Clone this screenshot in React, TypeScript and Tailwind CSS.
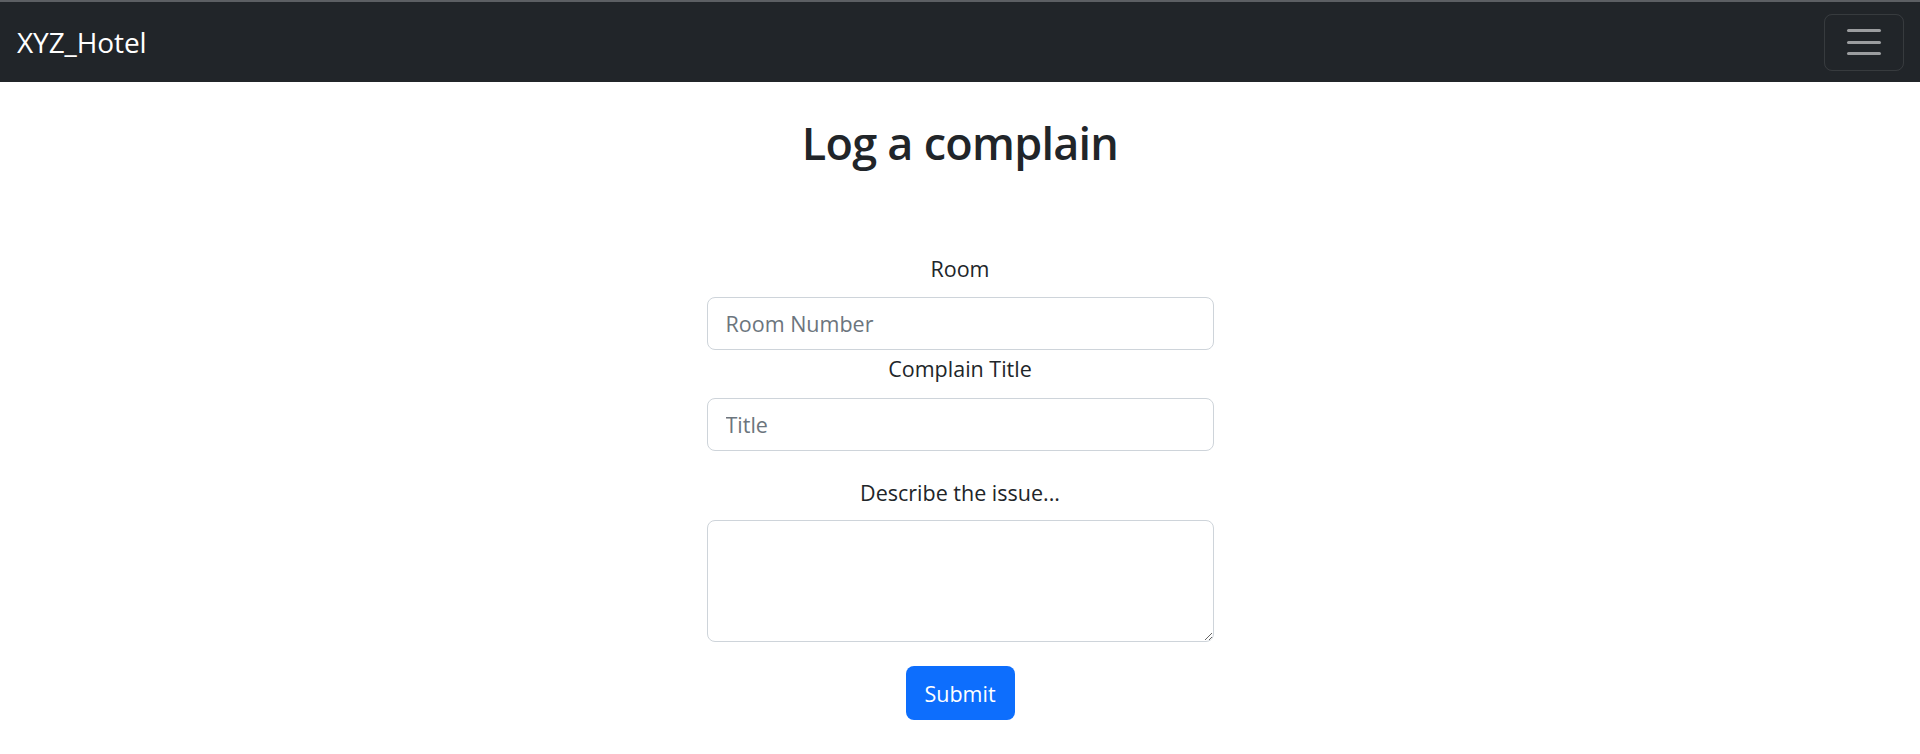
export default function App() {
  return (
    <div className="min-h-screen bg-white font-['Open_Sans',sans-serif] text-[#212529]">
      {/* Navbar */}
      <nav className="h-[82px] border-t-2 border-[#5c5f63] bg-[#212529] flex items-center justify-between pl-[17px] pr-[16px]">
        <a href="#" className="text-[28px] leading-none text-white tracking-[-0.1px]">
          XYZ_Hotel
        </a>
        <button className="w-[80px] h-[57px] rounded-[8px] border border-white/10 flex flex-col items-center justify-center gap-[8.5px]">
          <span className="block w-[34px] h-[3px] bg-white/55 rounded-full" />
          <span className="block w-[34px] h-[3px] bg-white/55 rounded-full" />
          <span className="block w-[34px] h-[3px] bg-white/55 rounded-full" />
        </button>
      </nav>

      {/* Title */}
      <h1 className="mt-[34px] text-center text-[45px] leading-[1.2] font-semibold tracking-[-0.75px]">
        Log a complain
      </h1>

      {/* Form */}
      <div className="flex justify-center mt-[82px]">
        <form className="w-[507px] flex flex-col items-center text-[21.5px] leading-[33px]">
          <label className="mb-[12px]">Room</label>
          <input
            type="text"
            placeholder="Room Number"
            className="w-full h-[53px] px-[18px] rounded-[8px] border border-[#ced4da] placeholder:text-[#6c757d] outline-none"
          />
          <label className="mt-[2px] mb-[13px]">Complain Title</label>
          <input
            type="text"
            placeholder="Title"
            className="w-full h-[53px] px-[18px] rounded-[8px] border border-[#ced4da] placeholder:text-[#6c757d] outline-none"
          />
          <label className="mt-[25px] mb-[11px]">Describe the issue...</label>
          <textarea
            rows={3}
            className="w-full h-[122px] px-[18px] py-[8px] rounded-[8px] border border-[#ced4da] outline-none resize-y"
          />
          <button
            type="button"
            className="mt-[24px] w-[109px] h-[54px] rounded-[8px] bg-[#0d6efd] text-white text-[21.5px]"
          >
            Submit
          </button>
        </form>
      </div>
    </div>
  )
}
